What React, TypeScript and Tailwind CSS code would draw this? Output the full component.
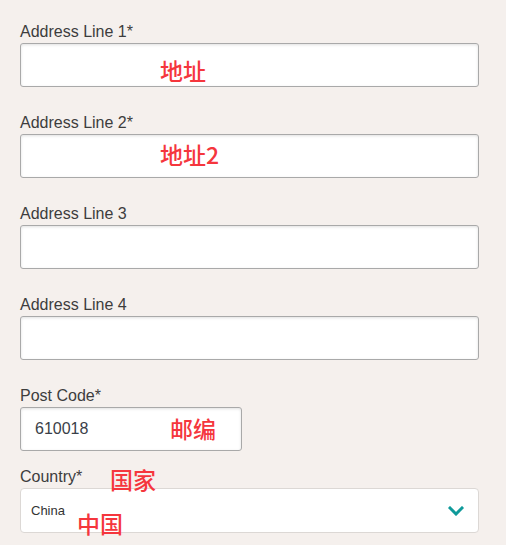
import React from "react";

const inputCls =
  "h-[44px] w-full rounded-[3px] border border-[#a9a9a9] bg-white shadow-[inset_0_1px_3px_rgba(0,0,0,0.12)] flex items-center";

const cjk = { fontFamily: '"Noto Sans CJK SC", "Noto Sans", sans-serif' };
const redCls = "text-[23px] leading-[28px] font-medium text-[#f5363d] whitespace-nowrap";

function Label({ children }: { children: React.ReactNode }) {
  return <div className="h-[18px] text-[16px] leading-[18px] text-[#3d3d3d] mb-[2px]">{children}</div>;
}

export default function App() {
  return (
    <div
      className="w-[506px] h-[545px] overflow-hidden bg-[#f5f0ed] pl-[20px] pt-[23px]"
      style={{ fontFamily: '"Liberation Sans", Arial, sans-serif' }}
    >
      <div className="w-[459px] flex flex-col gap-[27px]">
        <div className="flex flex-col">
          <Label>Address Line 1*</Label>
          <div className={inputCls}>
            <span className={redCls + " ml-[139px] mt-[10px]"} style={cjk}>地址</span>
          </div>
        </div>
        <div className="flex flex-col">
          <Label>Address Line 2*</Label>
          <div className={inputCls}>
            <span className={redCls + " ml-[139px] mb-[4px]"} style={cjk}>地址2</span>
          </div>
        </div>
        <div className="flex flex-col">
          <Label>Address Line 3</Label>
          <div className={inputCls} />
        </div>
        <div className="flex flex-col">
          <Label>Address Line 4</Label>
          <div className={inputCls} />
        </div>
        <div className="flex flex-col -mb-[10px]">
          <Label>Post Code*</Label>
          <div className={inputCls + " !w-[222px] pl-[14px]"}>
            <span className="w-[135px] text-[16px] text-[#3a3f48]">610018</span>
            <span className={redCls + " mb-[2px]"} style={cjk}>邮编</span>
          </div>
        </div>
        <div className="relative flex flex-col">
          <Label>Country*</Label>
          <div className="h-[45px] w-full rounded-[4px] border border-[#dcd8d5] bg-white flex items-center pl-[10px] pr-[14px]">
            <span className="text-[13px] text-[#333]">China</span>
            <div className="flex-1" />
            <svg width="16" height="10" viewBox="0 0 16 10">
              <path d="M2 2 L8 8 L14 2" fill="none" stroke="#0f9a9a" strokeWidth="3" strokeLinecap="square" />
            </svg>
          </div>
          <span className={"absolute left-[90px] top-[-3px] " + redCls} style={cjk}>国家</span>
          <span className={"absolute left-[57px] top-[41px] " + redCls} style={cjk}>中国</span>
        </div>
      </div>
    </div>
  );
}
